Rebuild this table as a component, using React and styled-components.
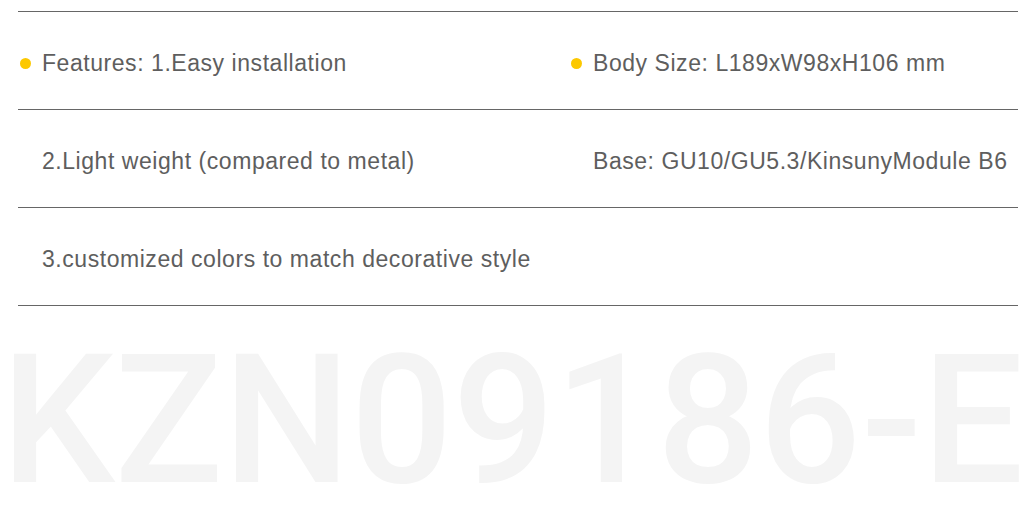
import styled, { createGlobalStyle } from 'styled-components'

const GlobalStyle = createGlobalStyle`
  html, body {
    margin: 0;
    padding: 0;
    background: #fff;
    overflow: hidden;
  }
`

const Page = styled.div`
  width: 1034px;
  height: 522px;
  padding: 11px 16px 0 18px;
  box-sizing: border-box;
  overflow: hidden;
`

const SpecList = styled.ul`
  list-style: none;
  margin: 0;
  padding: 0;
  border-top: 1px solid #666;
`

const SpecRow = styled.li`
  display: grid;
  grid-template-columns: 551px 1fr;
  height: 98px;
  box-sizing: border-box;
  border-bottom: 1px solid #666;
`

const SpecCell = styled.div`
  display: flex;
  align-items: center;
  gap: 11px;
  padding-top: 5px;
  font-family: "Liberation Sans", Arial, sans-serif;
  font-size: 23px;
  letter-spacing: 0.55px;
  color: #5e5e5e;
  white-space: nowrap;
`

const Dot = styled.span`
  width: 11px;
  height: 11px;
  margin-left: 2px;
  border-radius: 50%;
  background: ${p => (p.$hidden ? 'transparent' : '#fcc800')};
  flex-shrink: 0;
`

const Watermark = styled.div`
  margin: 25px -16px 0 -17px;
  font-family: Roboto, "Liberation Sans", sans-serif;
  font-weight: 500;
  font-size: 180px;
  letter-spacing: -0.2px;
  line-height: 1;
  color: #f4f4f4;
  white-space: nowrap;
  user-select: none;
`

const rows = [
  [
    { text: 'Features: 1.Easy installation', dot: true },
    { text: 'Body Size: L189xW98xH106 mm', dot: true },
  ],
  [
    { text: '2.Light weight (compared to metal)' },
    { text: 'Base: GU10/GU5.3/KinsunyModule B6' },
  ],
  [{ text: '3.customized colors to match decorative style' }, null],
]

export default function App() {
  return (
    <Page>
      <GlobalStyle />
      <SpecList>
        {rows.map((row, i) => (
          <SpecRow key={i}>
            {row.map((cell, j) => (
              <SpecCell key={j}>
                {cell && (
                  <>
                    <Dot $hidden={!cell.dot} />
                    <span>{cell.text}</span>
                  </>
                )}
              </SpecCell>
            ))}
          </SpecRow>
        ))}
      </SpecList>
      <Watermark>KZN09186-E</Watermark>
    </Page>
  )
}
